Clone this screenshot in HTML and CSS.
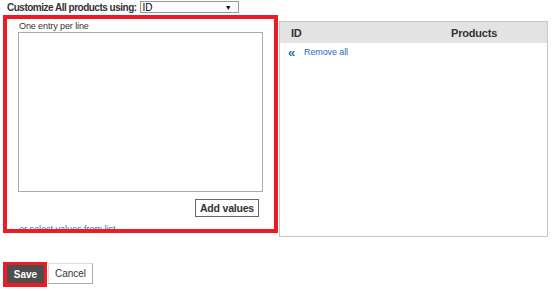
FILE: index.html
```html
<!DOCTYPE html>
<html>
<head>
    <title>Customize products</title>
    <link rel="stylesheet" href="styles.css">
</head>
<body>
    <div class="top-row">
        <span class="top-label">Customize All products using:</span>
        <div class="select-box">
            <span>ID</span>
            <span class="select-arrow">&#9660;</span>
        </div>
    </div>

    <div class="main-row">
        <div class="entry-pane">
            <div class="entry-label">One entry per line</div>
            <textarea class="entry-text"></textarea>
            <div class="add-row">
                <button class="add-btn">Add values</button>
            </div>
            <a class="list-link" href="#">or select values from list</a>
        </div>

        <div class="result-pane">
            <div class="result-head">
                <span class="col-id">ID</span>
                <span class="col-products">Products</span>
            </div>
            <div class="remove-row">
                <span class="remove-icon">&laquo;</span>
                <a class="remove-link" href="#">Remove all</a>
            </div>
        </div>
    </div>

    <div class="action-row">
        <div class="save-mark">
            <button class="save-btn">Save</button>
        </div>
        <button class="cancel-btn">Cancel</button>
    </div>
</body>
</html>
```

FILE: styles.css
```css
body {
    font-family: "Liberation Sans", Arial, sans-serif;
    margin: 0;
    background-color: white;
    color: #333;
    font-size: 10px;
}

.top-row {
    display: flex;
    align-items: center;
    height: 15px;
    padding-left: 7px;
}

.top-label {
    font-weight: bold;
    font-size: 10px;
    letter-spacing: -0.5px;
    margin-right: 3px;
}

.select-box {
    width: 99px;
    height: 12px;
    border: 1px solid #999;
    box-sizing: border-box;
    display: flex;
    justify-content: space-between;
    align-items: center;
    padding: 0 6px 0 2px;
    font-size: 10px;
    color: #000;
    margin-top: -1px;
}

.select-arrow {
    font-size: 7px;
}

.main-row {
    display: flex;
    align-items: flex-start;
}

.entry-pane {
    width: 275px;
    height: 218px;
    margin-left: 3px;
    border: 4px solid #ec1c24;
    box-sizing: border-box;
    padding: 2px 11px 0 11px;
    overflow: hidden;
}

.entry-label {
    font-size: 9px;
    letter-spacing: -0.1px;
    line-height: 11px;
    height: 11px;
    padding-left: 1px;
}

.entry-text {
    display: block;
    width: 245px;
    height: 160px;
    box-sizing: border-box;
    border: 1px solid #aaa;
    margin: 0;
    resize: none;
}

.add-row {
    display: flex;
    justify-content: flex-end;
    margin-top: 7px;
    padding-right: 4px;
}

.add-btn {
    width: 64px;
    height: 18px;
    border: 1px solid #666;
    background-color: white;
    font-family: "Liberation Sans", Arial, sans-serif;
    font-weight: bold;
    font-size: 10.5px;
    letter-spacing: -0.2px;
    color: #333;
    padding: 0;
}

.list-link {
    display: block;
    margin-top: 7px;
    font-size: 9px;
    color: #2a6ebb;
    text-decoration: none;
    padding-left: 1px;
}

.result-pane {
    width: 269px;
    height: 216px;
    margin-top: 6px;
    margin-left: 1px;
    border: 1px solid #c8c8c8;
    box-sizing: border-box;
}

.result-head {
    display: flex;
    height: 21px;
    align-items: center;
    background-color: #e3e3e3;
    font-weight: bold;
    font-size: 11px;
    letter-spacing: -0.2px;
    color: #333;
    padding-left: 11px;
}

.col-id {
    width: 160px;
}

.remove-row {
    display: flex;
    align-items: center;
    height: 16px;
    padding-left: 8px;
    margin-top: 1px;
}

.remove-icon {
    color: #2a6ebb;
    font-weight: bold;
    font-size: 13px;
    width: 16px;
}

.remove-link {
    font-size: 9px;
    letter-spacing: -0.1px;
    color: #2a6ebb;
    text-decoration: none;
}

.action-row {
    display: flex;
    align-items: flex-start;
    margin-top: 25px;
    padding-left: 3px;
}

.save-mark {
    border: 3px solid #ec1c24;
    border-left-width: 4px;
    border-bottom-width: 4px;
    padding: 0;
}

.save-btn {
    display: block;
    width: 37px;
    height: 18px;
    border: none;
    background-color: #4d4d4d;
    color: white;
    font-family: "Liberation Sans", Arial, sans-serif;
    font-weight: bold;
    font-size: 10px;
    padding: 0;
}

.cancel-btn {
    width: 45px;
    height: 21px;
    margin-left: 1px;
    margin-top: 1px;
    border: 1px solid #ddd;
    border-right-color: #aaa;
    border-bottom-color: #aaa;
    background-color: white;
    font-family: "Liberation Sans", Arial, sans-serif;
    font-size: 10px;
    color: #333;
    padding: 0;
}
```
